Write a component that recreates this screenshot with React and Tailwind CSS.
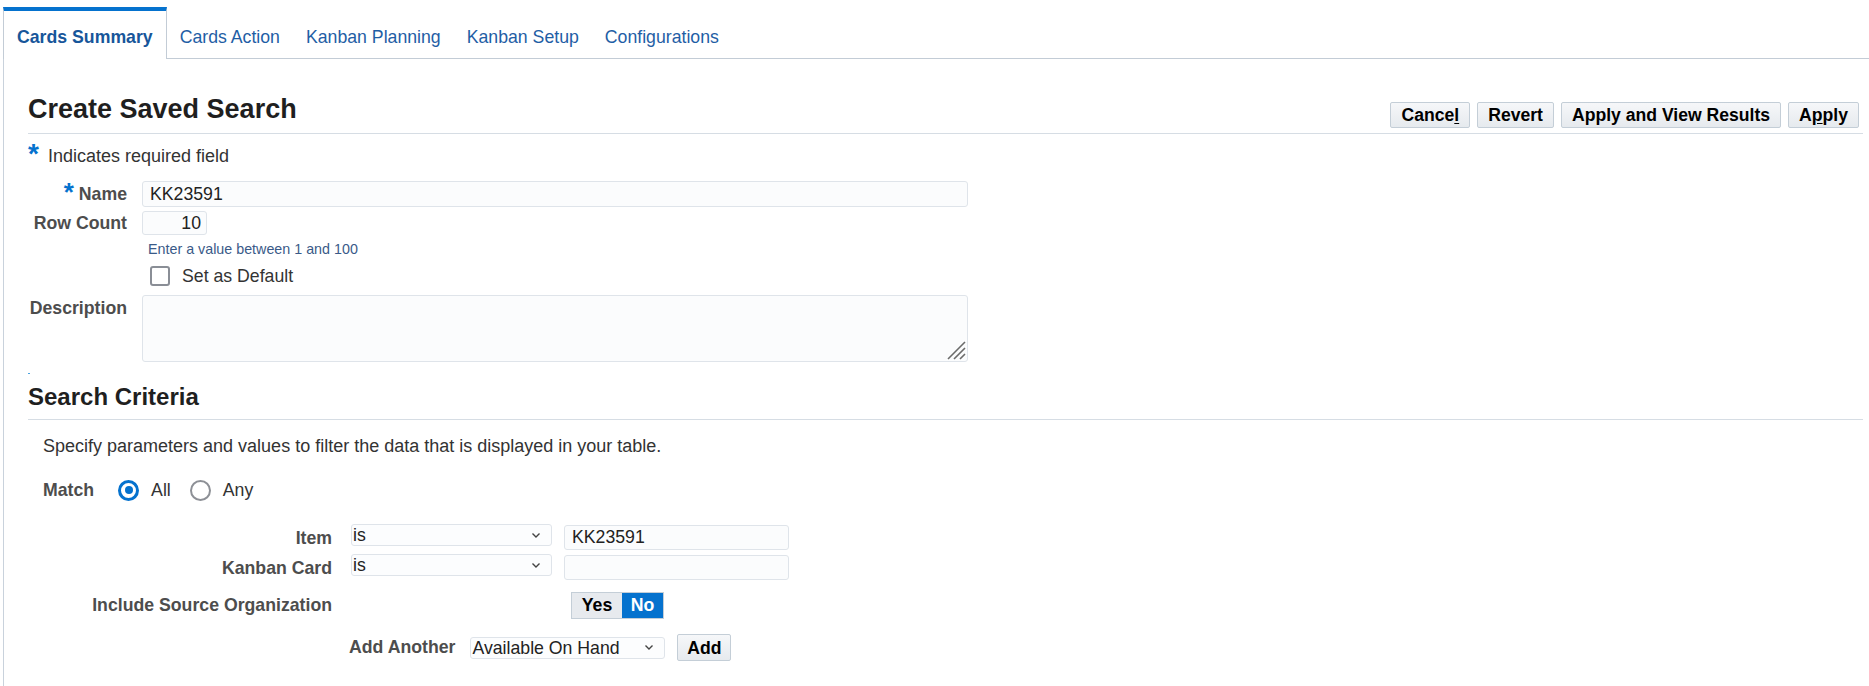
import React from "react";

const tabs = ["Cards Summary", "Cards Action", "Kanban Planning", "Kanban Setup", "Configurations"];

function Chevron() {
  return (
    <svg width="10" height="7" viewBox="0 0 10 7" className="shrink-0">
      <path d="M1.5 1.5 L5 5 L8.5 1.5" fill="none" stroke="#444" strokeWidth="1.4" />
    </svg>
  );
}

function FakeSelect({ value, width }) {
  return (
    <div
      className={`${width} h-[22px] flex items-center justify-between pl-[1px] pr-[10px] bg-[#fcfdfe] border border-[#dfe4ea] rounded-[3px] text-[#222]`}
    >
      <span className="leading-[20px]">{value}</span>
      <Chevron />
    </div>
  );
}

function ActionButton({ children, className = "" }) {
  return (
    <button
      className={`h-[26px] px-[10px] bg-gradient-to-b from-[#f6f7f9] to-[#e6eaee] border border-[#c4ced7] rounded-[2px] font-bold text-[17.6px] leading-[24px] text-black ${className}`}
    >
      {children}
    </button>
  );
}

export default function App() {
  return (
    <div className="w-[1869px] h-[686px] bg-white overflow-hidden font-['Liberation_Sans',Arial,sans-serif] text-[17.7px] text-[#333]">
      {/* tab strip */}
      <div className="flex items-end pt-[7px] pl-[3px]">
        {tabs.map((t, i) =>
          i === 0 ? (
            <div
              key={t}
              className="h-[52px] border-t-4 border-t-[#0572ce] border-x border-x-[#c3ccd6] px-[13px] pt-[4px] flex items-center font-bold text-[#17569a] bg-white"
            >
              {t}
            </div>
          ) : (
            <div
              key={t}
              className="h-[52px] border-t-4 border-t-transparent border-b border-b-[#c3ccd6] px-[13px] pt-[5px] flex items-center text-[#1f5ea5]"
            >
              {t}
            </div>
          )
        )}
        <div className="flex-1 h-[52px] border-b border-[#c3ccd6]" />
      </div>

      <div className="ml-[3px] border-l border-[#c9d2dc] h-[627px] pt-[32px] pl-[24px] pr-[6px]">
        {/* page header */}
        <div className="h-[43px] border-b border-[#d6dde4] flex justify-between items-end pb-[5px]">
          <h1 className="text-[27px] leading-[32px] font-bold text-[#1f1f1f] mb-[3px]">Create Saved Search</h1>
          <div className="flex gap-[7px] mr-[4px]">
            <ActionButton>
              Cance<span className="underline underline-offset-2">l</span>
            </ActionButton>
            <ActionButton>Revert</ActionButton>
            <ActionButton>Apply and View Results</ActionButton>
            <ActionButton>
              A<span className="underline underline-offset-2">p</span>ply
            </ActionButton>
          </div>
        </div>

        {/* required note */}
        <div className="mt-[9px] flex items-baseline h-[20px] leading-[20px] text-[18px]">
          <span className="w-[20px] text-[28px] font-bold text-[#0572ce] relative top-[1px]">*</span>
          <span>Indicates required field</span>
        </div>

        {/* name */}
        <div className="mt-[18px] flex items-center h-[26px]">
          <div className="w-[99px] flex justify-end items-baseline font-bold text-[#4d4d4d]">
            <span className="text-[26px] leading-[20px] text-[#0572ce] mr-[5px] relative top-[1px]">*</span>
            <span>Name</span>
          </div>
          <div className="ml-[15px] w-[826px] h-[26px] px-[7px] flex items-center bg-[#fbfcfd] border border-[#dfe4ea] rounded-[3px] text-[#222]">
            KK23591
          </div>
        </div>

        {/* row count */}
        <div className="mt-[4px] flex items-center h-[24px]">
          <div className="w-[99px] text-right font-bold text-[#4d4d4d]">Row Count</div>
          <div className="ml-[15px] w-[65px] h-[24px] pr-[5px] flex items-center justify-end bg-[#fbfcfd] border border-[#dfe4ea] rounded-[3px] text-[#222]">
            10
          </div>
        </div>
        <div className="mt-[6px] ml-[120px] text-[14.3px] leading-[16px] text-[#3a5a88]">
          Enter a value between 1 and 100
        </div>

        {/* default checkbox */}
        <div className="mt-[9px] ml-[122px] flex items-center h-[20px]">
          <div className="w-[20px] h-[20px] border-2 border-[#8a8e96] rounded-[3px] bg-white" />
          <span className="ml-[12px]">Set as Default</span>
        </div>

        {/* description */}
        <div className="mt-[9px] flex items-start">
          <div className="w-[99px] pt-[3px] leading-[20px] text-right font-bold text-[#4d4d4d]">Description</div>
          <div className="ml-[15px] w-[826px] h-[67px] relative bg-[#fbfcfd] border border-[#dfe4ea] rounded-[3px]">
            <svg width="20" height="20" viewBox="0 0 20 20" className="absolute right-[1px] bottom-[1px]">
              <path d="M2 19 L19 2 M8 19 L19 8 M14 19 L19 14" stroke="#6b6b6b" strokeWidth="1.6" />
            </svg>
          </div>
        </div>
        <div className="mt-[11px] w-[2px] h-px bg-[#4aa3df]" />

        {/* search criteria */}
        <div className="mt-[7px] pt-[2px] pb-[8px] border-b border-[#d6dde4]">
          <h2 className="text-[24px] leading-[28px] font-bold text-[#1f1f1f]">Search Criteria</h2>
        </div>

        <div className="pl-[15px]">
          <p className="mt-[16px] leading-[20px] text-[18px]">
            Specify parameters and values to filter the data that is displayed in your table.
          </p>

          <div className="mt-[23px] h-[22px] flex items-center">
            <span className="font-bold text-[#4d4d4d]">Match</span>
            <span className="ml-[24px] w-[21px] h-[21px] rounded-full border-[3px] border-[#0572ce] flex items-center justify-center">
              <span className="w-[8px] h-[8px] rounded-full bg-[#0572ce]" />
            </span>
            <span className="ml-[12px]">All</span>
            <span className="ml-[19px] w-[21px] h-[21px] rounded-full border-2 border-[#8d9096]" />
            <span className="ml-[12px]">Any</span>
          </div>

          <div className="mt-[23px] h-[30px] flex items-start">
            <div className="w-[289px] text-right leading-[28px] font-bold text-[#4d4d4d]">Item</div>
            <div className="ml-[19px]">
              <FakeSelect value="is" width="w-[201px]" />
            </div>
            <div className="ml-[12px] mt-[1px] w-[225px] h-[25px] px-[7px] flex items-center bg-[#fbfcfd] border border-[#dfe4ea] rounded-[3px] text-[#222]">
              KK23591
            </div>
          </div>

          <div className="h-[30px] flex items-start">
            <div className="w-[289px] text-right leading-[28px] font-bold text-[#4d4d4d]">Kanban Card</div>
            <div className="ml-[19px]">
              <FakeSelect value="is" width="w-[201px]" />
            </div>
            <div className="ml-[12px] mt-[1px] w-[225px] h-[25px] bg-[#fbfcfd] border border-[#dfe4ea] rounded-[3px]" />
          </div>

          <div className="mt-[8px] h-[27px] flex items-center">
            <div className="w-[289px] text-right font-bold text-[#4d4d4d]">Include Source Organization</div>
            <div className="ml-[239px] flex h-[27px] border border-[#c4ced7] font-bold">
              <span className="w-[50px] flex items-center justify-center bg-[#e7eaee] text-black">Yes</span>
              <span className="w-[41px] flex items-center justify-center bg-[#0572ce] text-white">No</span>
            </div>
          </div>

          <div className="mt-[15px] h-[27px] flex items-center">
            <span className="ml-[306px] font-bold text-[#4d4d4d]">Add Another</span>
            <div className="ml-[15px]">
              <FakeSelect value="Available On Hand" width="w-[195px]" />
            </div>
            <ActionButton className="ml-[12px] h-[27px] w-[54px] !px-0">Add</ActionButton>
          </div>
        </div>
      </div>
    </div>
  );
}
